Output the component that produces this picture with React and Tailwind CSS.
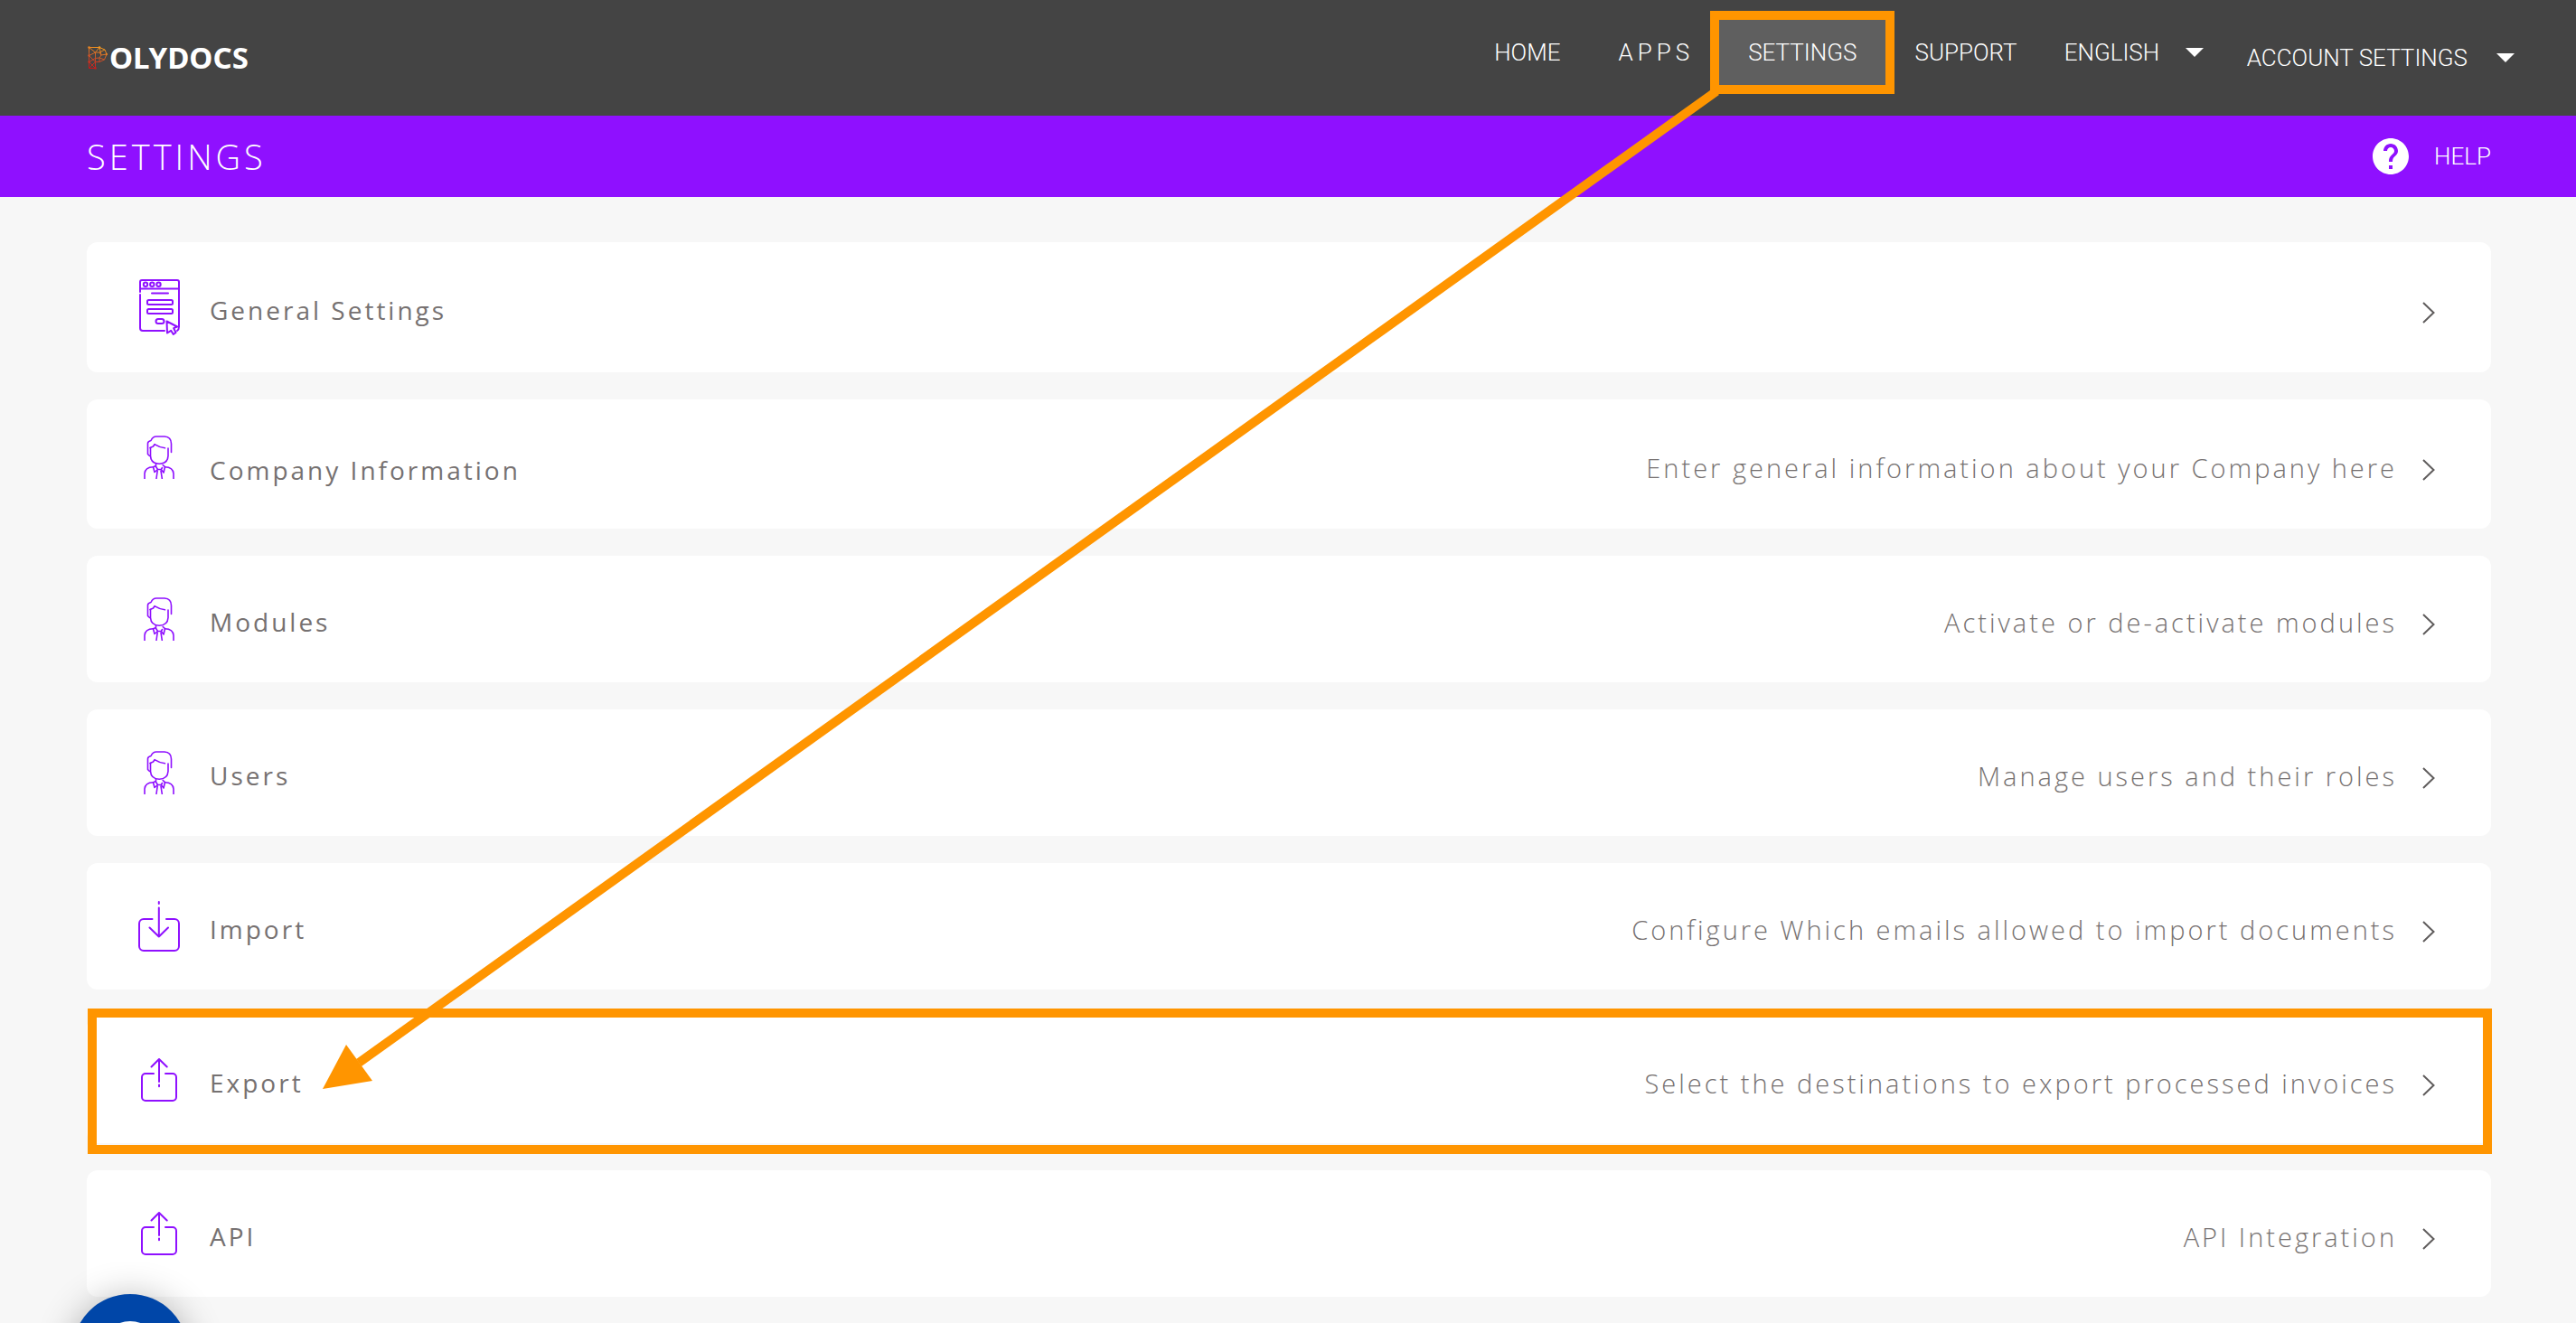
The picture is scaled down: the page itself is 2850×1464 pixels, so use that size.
const stroke = { fill: 'none', stroke: '#8f10ff', strokeWidth: 2, strokeLinecap: 'round', strokeLinejoin: 'round' };

function FormIcon() {
  return (
    <svg width="45" height="62" viewBox="0 0 45 62" aria-hidden="true" {...stroke}>
      <path d="M1 14V3a2 2 0 0 1 2-2h39a2 2 0 0 1 2 2v49.500q0 3-2 4.500" />
      <path d="M1 17v37a3 3 0 0 0 3 3h24M1 10.500h43M14 15.500h18" />
      <circle cx="7" cy="5.700" r="2.200" />
      <circle cx="14.300" cy="5.700" r="2.200" />
      <circle cx="21.500" cy="5.700" r="2.200" />
      <rect x="9" y="23" width="28" height="5" rx="1.500" />
      <rect x="9" y="33" width="28" height="5" rx="1.500" />
      <rect x="18.500" y="44" width="9" height="5" rx="2.500" />
      <path d="M30.500 46.500 42 52.500 38.200 54.200 40.500 59 37.800 61 35.200 56.800 31 59.500Z" />
    </svg>
  );
}

function PersonIcon() {
  return (
    <svg width="34" height="48" viewBox="0 0 34 48" aria-hidden="true" {...stroke} strokeWidth="1.600">
      <path d="M6.500 22.500 4.500 20.500V8.500Q4.500 6.500 8 5.500 10 1 14 1H23Q30.500 1.500 30.500 9V18.500" />
      <path d="M7.500 13.500V22.500Q8 31 17.200 31.200 26.500 31 27 22.500V14" />
      <path d="M7 13.500 10.500 12 12 9.700Q17 13 23.500 13.800" />
      <path d="M13.500 31.500V33.500L10.500 34.700 12 40.500 15.500 37.500 13 33.500M21.200 32.500 23.500 34.700 22 41 19.300 37.500H15.500M20.500 35.500 19.300 37.500" />
      <path d="M15.200 39 14 47.500M19 39 20.300 47.500M1 47.500V42Q1.500 35 10.500 34.700M33 47.500V42Q32.500 35 23.500 34.700" />
    </svg>
  );
}

function ImportIcon() {
  return (
    <svg width="46" height="56" viewBox="0 0 46 56" aria-hidden="true" {...stroke}>
      <path d="M15.500 20H6a5 5 0 0 0-5 5v25a5 5 0 0 0 5 5h34a5 5 0 0 0 5-5V25a5 5 0 0 0-5-5h-9" />
      <path d="M22.800 7.500V39.500M22.800 1v2M12.500 29.500l10.300 10 10.200-10" />
    </svg>
  );
}

function ExportIcon() {
  return (
    <svg width="40" height="48" viewBox="0 0 40 48" aria-hidden="true" {...stroke}>
      <path d="M14 17H5a4 4 0 0 0-4 4v22a4 4 0 0 0 4 4h30a4 4 0 0 0 4-4V21a4 4 0 0 0-4-4h-8" />
      <path d="M20 1V26M20 29.500v1.800M11.500 9.500 20 1l8.700 8.500" />
    </svg>
  );
}

function Caret() {
  return (
    <svg width="20" height="10" viewBox="0 0 20 10" fill="#fff" aria-hidden="true">
      <path d="M0 0H20L10 10Z" />
    </svg>
  );
}

function LogoMark() {
  return (
    <svg width="22" height="26" viewBox="0 0 22 26" fill="none" strokeWidth="1" aria-hidden="true">
      <defs>
        <linearGradient id="mark" gradientUnits="userSpaceOnUse" x1="14" y1="0" x2="6" y2="25">
          <stop offset="0" stopColor="#f7a01e" />
          <stop offset="0.500" stopColor="#c9562a" />
          <stop offset="1" stopColor="#c0181c" />
        </linearGradient>
      </defs>
      <g stroke="url(#mark)">
        <path d="M1.500 1.500H13L19 4 21 9 18.500 15 13 17.500H8.500V24.500H1.500Z" />
        <path d="M8.500 7H13L15 10 13 13 8.500 13.500ZM1.500 1.500 8.500 7 13 1.500 15 10 21 9M1.500 10.500 8.500 7M1.500 10.500 8.500 17.500 1.500 24.500M1.500 17.500 8.500 13.500M1.500 17.500 8.500 24.500M13 13 18.500 15M8.500 7V17.500M13 7 19 4M13 13V17.500" />
      </g>
      <g fill="url(#mark)">
        <circle cx="1.500" cy="1.500" r="1.300" />
        <circle cx="13" cy="1.500" r="1.300" />
        <circle cx="21" cy="9" r="1.200" />
        <circle cx="1.500" cy="10.500" r="1.300" />
        <circle cx="1.500" cy="17.500" r="1.300" />
        <circle cx="8.500" cy="24.500" r="1.300" />
      </g>
    </svg>
  );
}

const rows = [
  { title: 'General Settings', text: '', icon: FormIcon, height: 'min-h-36', iconPad: '', titlePad: 'pt-1.5' },
  { title: 'Company Information', text: 'Enter general information about your Company here', icon: PersonIcon, height: 'min-h-[143px]', iconPad: 'pb-4', titlePad: 'pt-3' },
  { title: 'Modules', text: 'Activate or de-activate modules', icon: PersonIcon, height: 'min-h-[140px]', iconPad: '', titlePad: 'pt-1.5' },
  { title: 'Users', text: 'Manage users and their roles', icon: PersonIcon, height: 'min-h-[140px]', iconPad: '', titlePad: 'pt-1.5' },
  { title: 'Import', text: 'Configure Which emails allowed to import documents', icon: ImportIcon, height: 'min-h-[140px]', iconPad: '', titlePad: 'pt-1.5' },
  { title: 'Export', text: 'Select the destinations to export processed invoices', icon: ExportIcon, height: 'min-h-[140px]', iconPad: '', titlePad: 'pt-1.5', marked: true },
  { title: 'API', text: 'API Integration', icon: ExportIcon, height: 'min-h-[140px]', iconPad: '', titlePad: 'pt-1.5' },
];

function SettingsRow({ title, text, icon: Icon, height, iconPad, titlePad, marked }) {
  return (
    <li className="relative">
      <a href="#" className={`flex items-center rounded-xl bg-white pl-12 pr-[62px] font-['Open_Sans',sans-serif] text-[#767171] ${height}`}>
        <span className={`flex w-16 shrink-0 justify-center ${iconPad}`}>
          <Icon />
        </span>
        <span className={`ml-6 text-[28px] leading-9 tracking-[3px] ${titlePad}`}>{title}</span>
        <span className="ml-auto flex items-center gap-7 pt-3">
          <span className="pb-1 text-[29px] font-light leading-9 tracking-[3px]">{text}</span>
          <svg width="14" height="24" viewBox="0 0 14 24" fill="none" stroke="#5f5c5c" strokeWidth="2" aria-hidden="true">
            <path d="M1 1 12.500 12 1 23" />
          </svg>
        </span>
      </a>
      {marked && <span className="pointer-events-none absolute -bottom-3 -right-px -top-[9px] left-px border-[10px] border-[#ff9500]" />}
    </li>
  );
}

export default function App() {
  return (
    <div className="relative min-h-screen overflow-hidden bg-[#f7f7f7] font-['Roboto',sans-serif]">
      <header className="flex h-32 items-center justify-between bg-[#444] pl-[97px] pr-[68px] text-[26px] font-light leading-8 text-white">
        <a href="#" className="flex items-center gap-0.5">
          <LogoMark />
          <span className="font-['Noto_Sans',sans-serif] text-[33px] font-bold leading-10">OLYDOCS</span>
        </a>
        <div className="flex items-center">
          <nav className="mb-3 flex items-center">
            <a href="#" className="px-8">HOME</a>
            <a href="#" className="pl-8 pr-7 tracking-[5px]">APPS</a>
            <a href="#" className="relative bg-[#5f5f5f] px-8 py-5">
              SETTINGS
              <span className="pointer-events-none absolute -inset-2.5 border-[10px] border-[#ff9500]" />
            </a>
            <a href="#" className="pl-8 pr-9">SUPPORT</a>
            <label className="ml-4 mr-12 flex items-center gap-7">
              <select aria-label="Language" className="appearance-none bg-transparent">
                <option>ENGLISH</option>
              </select>
              <Caret />
            </label>
          </nav>
          <button type="button" className="flex items-center gap-8">
            ACCOUNT SETTINGS
            <Caret />
          </button>
        </div>
      </header>

      <div className="flex h-[90px] items-center justify-between bg-[#8f10ff] pl-24 pr-[94px] font-light text-white">
        <h1 className="font-['Open_Sans',sans-serif] text-[38px] leading-10 tracking-[4px]">SETTINGS</h1>
        <a href="#" className="flex items-center gap-7 text-[26px] leading-8">
          <svg width="40" height="40" viewBox="2 2 20 20" fill="#fff" aria-hidden="true">
            <path d="M12 2C6.480 2 2 6.480 2 12s4.480 10 10 10 10-4.480 10-10S17.520 2 12 2zm1 17h-2v-2h2v2zm2.070-7.750l-.9.920C13.450 12.900 13 13.500 13 15h-2v-.5c0-1.100.45-2.100 1.170-2.830l1.240-1.260c.37-.36.590-.86.590-1.410 0-1.100-.9-2-2-2s-2 .9-2 2H8c0-2.210 1.790-4 4-4s4 1.790 4 4c0 .88-.36 1.680-.93 2.250z" />
          </svg>
          HELP
        </a>
      </div>

      <main className="pb-7 pl-24 pr-[94px] pt-[50px]">
        <ul className="flex flex-col gap-[30px]">
          {rows.map((row) => (
            <SettingsRow key={row.title} {...row} />
          ))}
        </ul>
      </main>

      <svg className="pointer-events-none absolute left-0 top-0 w-full" viewBox="0 0 2850 1464" aria-hidden="true">
        <path d="M1899 101 397 1176" stroke="#ff9500" strokeWidth="10" />
        <path d="M357 1205 383 1156 412 1196Z" fill="#ff9500" />
      </svg>

      <button
        type="button"
        aria-label="Support chat"
        className="absolute -bottom-24 left-20 flex size-32 justify-center rounded-full bg-[#0046a8] pt-[30px] shadow-[0_4px_40px_rgba(0,0,0,0.3)]"
      >
        <span className="size-16 rounded-full border-4 border-white" />
      </button>
    </div>
  );
}
